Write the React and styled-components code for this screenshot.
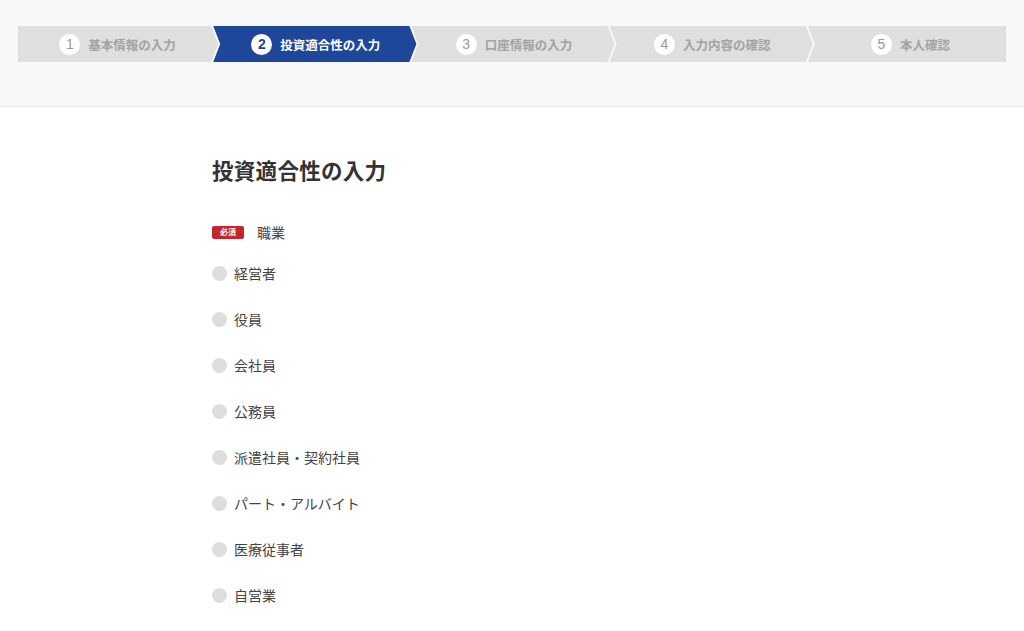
import React from "react";
import styled, { createGlobalStyle, css } from "styled-components";

const Global = createGlobalStyle`
  html, body { margin: 0; padding: 0; background: #fff; }
  body { font-family: "Noto Sans CJK JP", "Noto Sans", sans-serif; color: #333; }
  * { box-sizing: border-box; }
`;

const Header = styled.header`
  background: #f8f8f8;
  border-bottom: 1px solid #e6e6e6;
  height: 107px;
  padding: 26px 18px 0;
`;

const Steps = styled.ol`
  display: flex;
  list-style: none;
  margin: 0;
  padding: 0;
  height: 36px;
`;

const Step = styled.li`
  flex: 1 1 0;
  display: flex;
  align-items: center;
  justify-content: center;
  gap: 8px;
  padding: 0 6px 0 7px;
  margin-right: -6px;
  font-size: 12.5px;
  font-weight: 700;
  background: ${(p) => (p.$active ? "#1e4799" : "#dfdfdf")};
  color: ${(p) => (p.$active ? "#fff" : "#a3a3a3")};
  clip-path: polygon(0 0, calc(100% - 8px) 0, calc(100% - 1px) 50%, calc(100% - 8px) 100%, 0 100%, 7px 50%);
  ${(p) =>
    p.$first &&
    css`
      padding-left: 4px;
      clip-path: polygon(0 0, calc(100% - 8px) 0, calc(100% - 1px) 50%, calc(100% - 8px) 100%, 0 100%);
    `}
  ${(p) =>
    p.$last &&
    css`
      margin-right: 0;
      padding-right: 0;
      clip-path: polygon(0 0, 100% 0, 100% 100%, 0 100%, 7px 50%);
    `}
`;

const StepNum = styled.span`
  width: 21px;
  height: 21px;
  border-radius: 50%;
  background: #fff;
  display: flex;
  align-items: center;
  justify-content: center;
  font-family: "Liberation Sans", Arial, sans-serif;
  font-size: 14px;
  font-weight: ${(p) => (p.$active ? 700 : 400)};
  color: ${(p) => (p.$active ? "#1e4799" : "#9a9a9a")};
`;

const Main = styled.main`
  width: 600px;
  margin: 0 auto;
  padding-top: 47px;
`;

const Title = styled.h1`
  margin: 0 0 36px;
  font-size: 21.5px;
  line-height: 32px;
  font-weight: 700;
  color: #333;
  letter-spacing: 0.3px;
`;

const FieldLabel = styled.div`
  display: flex;
  align-items: center;
  gap: 13px;
  height: 20px;
  font-size: 14px;
  color: #444;
  margin-bottom: 21px;
`;

const Required = styled.span`
  display: inline-flex;
  align-items: center;
  justify-content: center;
  width: 32px;
  height: 13px;
  border-radius: 2px;
  background: #c4262c;
  color: #fff;
  font-size: 8px;
  font-weight: 700;
  line-height: 1;
`;

const Options = styled.div`
  display: flex;
  flex-direction: column;
  gap: 26px;
`;

const Option = styled.label`
  display: flex;
  align-items: center;
  gap: 7px;
  height: 20px;
  font-size: 14px;
  color: #444;
  cursor: pointer;
`;

const Radio = styled.span`
  width: 15px;
  height: 15px;
  border-radius: 50%;
  background: #dddddd;
  flex: none;
`;

const steps = ["基本情報の入力", "投資適合性の入力", "口座情報の入力", "入力内容の確認", "本人確認"];
const options = ["経営者", "役員", "会社員", "公務員", "派遣社員・契約社員", "パート・アルバイト", "医療従事者", "自営業"];

export default function App() {
  return (
    <>
      <Global />
      <Header>
        <Steps>
          {steps.map((s, i) => (
            <Step key={s} $active={i === 1} $first={i === 0} $last={i === steps.length - 1}>
              <StepNum $active={i === 1}>{i + 1}</StepNum>
              {s}
            </Step>
          ))}
        </Steps>
      </Header>
      <Main>
        <Title>投資適合性の入力</Title>
        <FieldLabel>
          <Required>必須</Required>
          職業
        </FieldLabel>
        <Options>
          {options.map((o) => (
            <Option key={o}>
              <Radio />
              {o}
            </Option>
          ))}
        </Options>
      </Main>
    </>
  );
}
